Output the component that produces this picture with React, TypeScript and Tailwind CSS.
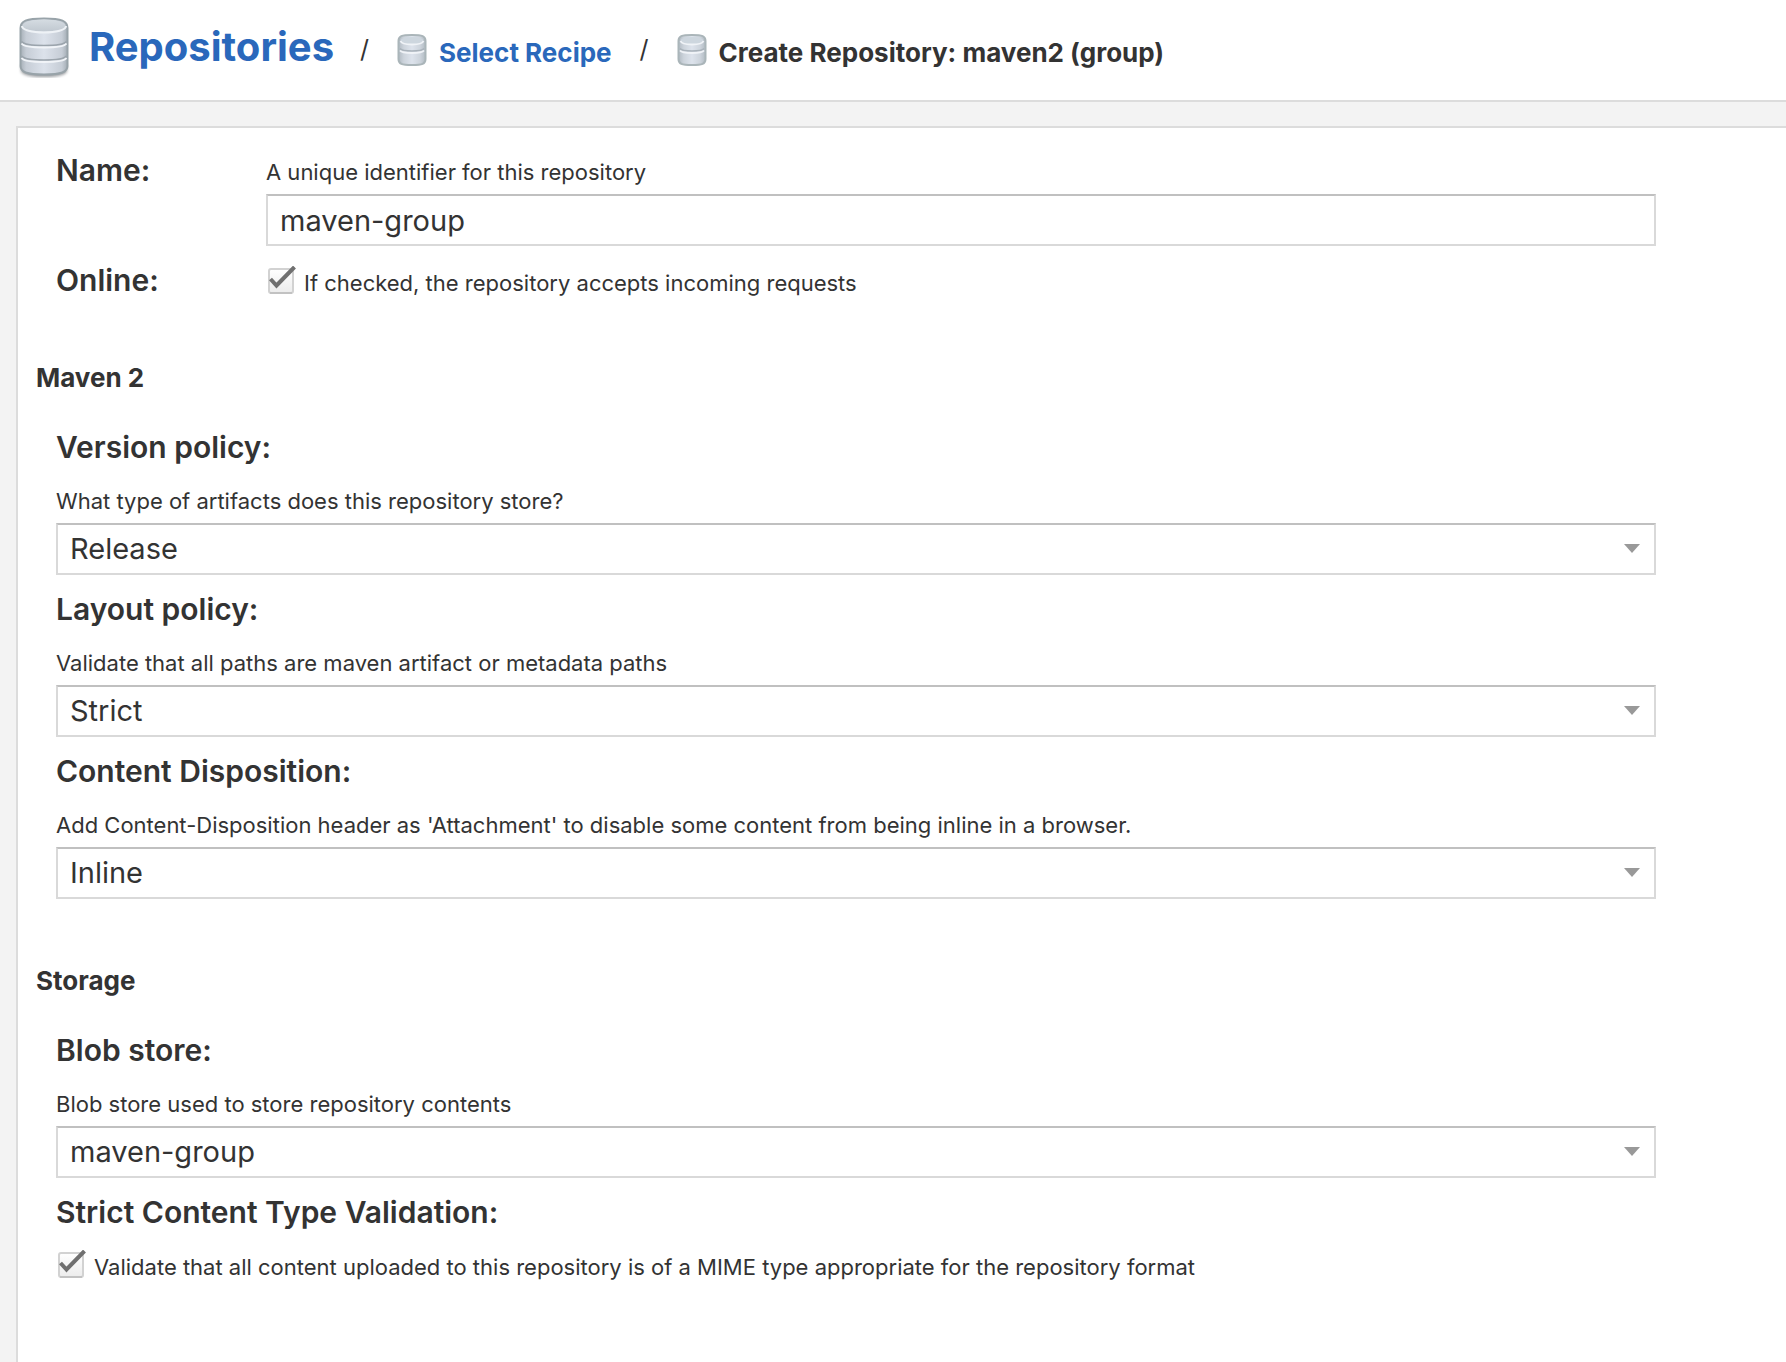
import React, { useId } from "react";

function LargeStoreIcon() {
  const id = useId();
  return (
    <svg className="h-[62px] w-[52px] shrink-0" viewBox="0 0 52 62" aria-hidden="true">
      <defs>
        <linearGradient id={`${id}b`} x1="0" x2="1" y1="0" y2="0">
          <stop offset="0" stopColor="#a7b0b8" />
          <stop offset="0.12" stopColor="#c6cdd6" />
          <stop offset="0.5" stopColor="#dce2eb" />
          <stop offset="0.88" stopColor="#c6cdd6" />
          <stop offset="1" stopColor="#a4adb5" />
        </linearGradient>
        <linearGradient id={`${id}t`} x1="0" x2="0" y1="0" y2="1">
          <stop offset="0" stopColor="#d5dce2" />
          <stop offset="1" stopColor="#c0c8d0" />
        </linearGradient>
        <filter id={`${id}s`} x="-20%" y="-50%" width="140%" height="200%">
          <feGaussianBlur stdDeviation="1.4" />
        </filter>
      </defs>
      <path d="M3 49v6c1 4 10 6 23 6s22-2 23-6v-6z" fill="#6b7075" opacity="0.7" filter={`url(#${id}s)`} />
      <path d="M2.500 12C2.500 5 8 2.500 26 2.500s23.500 2.500 23.500 9.500v38c0 6-6 8.500-23.500 8.500S2.500 56 2.500 50z" fill={`url(#${id}b)`} stroke="#98a3a9" strokeWidth="2" />
      <ellipse cx="26" cy="9.500" rx="21.500" ry="6" fill={`url(#${id}t)`} />
      <path d="M4 10c0 4 10 6.500 22 6.500s22-2.500 22-6.500" fill="none" stroke="#eef2f6" strokeWidth="2" />
      <path d="M3.500 25.500c2 3 11 4 22.500 4s20.500-1 22.500-4M3.500 40c2 3 11 4 22.500 4s20.500-1 22.500-4" fill="none" stroke="#9ba4ac" strokeWidth="1.500" />
      <path d="M3.500 27.500c2 3 11 4 22.500 4s20.500-1 22.500-4M3.500 42c2 3 11 4 22.500 4s20.500-1 22.500-4" fill="none" stroke="#f1f4f8" strokeWidth="1.800" />
    </svg>
  );
}

function SmallStoreIcon() {
  const id = useId();
  return (
    <svg className="h-8 w-[30px] shrink-0" viewBox="0 0 30 32" aria-hidden="true">
      <defs>
        <linearGradient id={`${id}b`} x1="0" x2="1" y1="0" y2="0">
          <stop offset="0" stopColor="#b2bbc3" />
          <stop offset="0.2" stopColor="#cdd4dc" />
          <stop offset="0.5" stopColor="#dde3ec" />
          <stop offset="0.8" stopColor="#cdd4dc" />
          <stop offset="1" stopColor="#b2bbc3" />
        </linearGradient>
      </defs>
      <path d="M1.500 7c0-5 3-6 13.500-6s13.500 1 13.500 6v18c0 5-3 6-13.500 6S1.500 30 1.500 25z" fill={`url(#${id}b)`} stroke="#aab5b9" strokeWidth="2" />
      <ellipse cx="15" cy="6.500" rx="11.500" ry="3.500" fill="#cdd6de" />
      <path d="M3.500 7c1 3 6 3.500 11.500 3.500s10.500-.5 11.500-3.500" fill="none" stroke="#f0f3f7" strokeWidth="1.800" />
      <path d="M3 14.500c1.500 2 6 2.500 12 2.500s10.500-.5 12-2.500" fill="none" stroke="#a9b2ba" strokeWidth="1.400" />
      <path d="M3 16.500c1.500 2 6 2.500 12 2.500s10.500-.5 12-2.500" fill="none" stroke="#f0f3f7" strokeWidth="1.800" />
    </svg>
  );
}

function Help({ id, children }: { id: string; children: React.ReactNode }) {
  return (
    <p id={id} className="text-[22px] leading-7">
      {children}
    </p>
  );
}

function SelectField({ id, label, help, value }: { id: string; label: string; help: string; value: string }) {
  return (
    <div className="mb-3.5">
      <label htmlFor={id} className="mb-5 block text-[30px] leading-10 font-semibold">
        {label}
      </label>
      <Help id={`${id}-help`}>{help}</Help>
      <div className="relative mt-2">
        <select
          id={id}
          aria-describedby={`${id}-help`}
          defaultValue={value}
          className="block h-[52px] w-full appearance-none border-2 border-[#d9d9d9] border-t-[#c0c0c0] bg-white px-3 text-[29px] outline-none"
        >
          <option value={value}>{value}</option>
        </select>
        <svg className="pointer-events-none absolute top-[21px] right-4 h-[9px] w-4" viewBox="0 0 16 9" aria-hidden="true">
          <path d="M0 0h16L8 9z" fill="#999" />
        </svg>
      </div>
    </div>
  );
}

function CheckField({ id, children }: { id: string; children: React.ReactNode }) {
  const grad = useId();
  return (
    <div className="flex items-start gap-2">
      <div className="relative size-[30px] shrink-0">
        <input id={id} type="checkbox" defaultChecked className="peer block size-[30px] appearance-none" />
        <svg className="pointer-events-none absolute inset-0 size-[30px]" viewBox="0 0 30 30" aria-hidden="true">
          <defs>
            <linearGradient id={grad} x1="0" x2="0" y1="0" y2="1">
              <stop offset="0" stopColor="#fff" />
              <stop offset="1" stopColor="#ececec" />
            </linearGradient>
          </defs>
          <rect x="3" y="3" width="24" height="24" rx="2" fill={`url(#${grad})`} stroke="#d2d2d2" strokeWidth="2" />
          <path d="M4 27h22" stroke="#bcbcbc" strokeWidth="1.500" />
        </svg>
        <svg className="pointer-events-none absolute inset-0 hidden size-[30px] peer-checked:block" viewBox="0 0 30 30" aria-hidden="true">
          <path d="M4.500 13l6 6.500L28.500 1" fill="none" stroke="#707070" strokeWidth="4" />
        </svg>
      </div>
      <label htmlFor={id} className="text-[22px] leading-[34px]">
        {children}
      </label>
    </div>
  );
}

function SectionTitle({ children }: { children: React.ReactNode }) {
  return <h2 className="mb-[31px] text-[26px] leading-9 font-bold">{children}</h2>;
}

export default function App() {
  return (
    <div className="flex min-h-screen flex-col bg-[#f3f3f3] font-['Inter',sans-serif] text-[#333]">
      <header className="border-b-2 border-[#dcdcdc] bg-white">
        <nav aria-label="Breadcrumb" className="flex h-[100px] items-center pl-[18px]">
          <h1 className="pb-1.5 text-[40px] leading-[50px] font-bold">
            <a href="#repositories" className="flex items-center gap-[19px] text-[#2a68bb]">
              <LargeStoreIcon />
              Repositories
            </a>
          </h1>
          <span className="ml-[26px] text-[25px]">/</span>
          <a href="#recipe" className="ml-[28px] flex items-center gap-3 text-[26px] font-bold text-[#2a68bb]">
            <SmallStoreIcon />
            <span className="pt-1">Select Recipe</span>
          </a>
          <span className="ml-[28px] text-[25px]">/</span>
          <span aria-current="page" className="ml-[28px] flex items-center gap-3 text-[26px] font-bold">
            <SmallStoreIcon />
            <span className="pt-1">Create Repository: maven2 (group)</span>
          </span>
        </nav>
      </header>
      <main className="mt-6 ml-4 flex-1 border-t-2 border-l-2 border-[#dcdcdc] bg-white pr-[130px] pl-[18px]">
        <form>
          <div className="grid grid-cols-[210px_1fr] pt-[22px] pl-5">
            <label htmlFor="name" className="text-[30px] leading-10 font-semibold">Name:</label>
            <div className="pt-2">
              <Help id="name-help">A unique identifier for this repository</Help>
              <input
                id="name"
                type="text"
                defaultValue="maven-group"
                aria-describedby="name-help"
                className="mt-2 block h-[52px] w-full border-2 border-[#d9d9d9] border-t-[#c0c0c0] bg-white px-3 text-[29px] outline-none"
              />
            </div>
            <label htmlFor="online" className="mt-3.5 text-[30px] leading-10 font-semibold">Online:</label>
            <div className="mt-5">
              <CheckField id="online">If checked, the repository accepts incoming requests</CheckField>
            </div>
          </div>
          <section className="mt-[60px]">
            <SectionTitle>Maven 2</SectionTitle>
            <div className="pl-5">
              <SelectField id="version" label="Version policy:" help="What type of artifacts does this repository store?" value="Release" />
              <SelectField id="layout" label="Layout policy:" help="Validate that all paths are maven artifact or metadata paths" value="Strict" />
              <SelectField id="disposition" label="Content Disposition:" help="Add Content-Disposition header as 'Attachment' to disable some content from being inline in a browser." value="Inline" />
            </div>
          </section>
          <section className="mt-[64px]">
            <SectionTitle>Storage</SectionTitle>
            <div className="pl-5">
              <SelectField id="blob" label="Blob store:" help="Blob store used to store repository contents" value="maven-group" />
              <label htmlFor="strict" className="mb-[18px] block text-[30px] leading-10 font-semibold">Strict Content Type Validation:</label>
              <CheckField id="strict">Validate that all content uploaded to this repository is of a MIME type appropriate for the repository format</CheckField>
            </div>
          </section>
        </form>
      </main>
    </div>
  );
}
